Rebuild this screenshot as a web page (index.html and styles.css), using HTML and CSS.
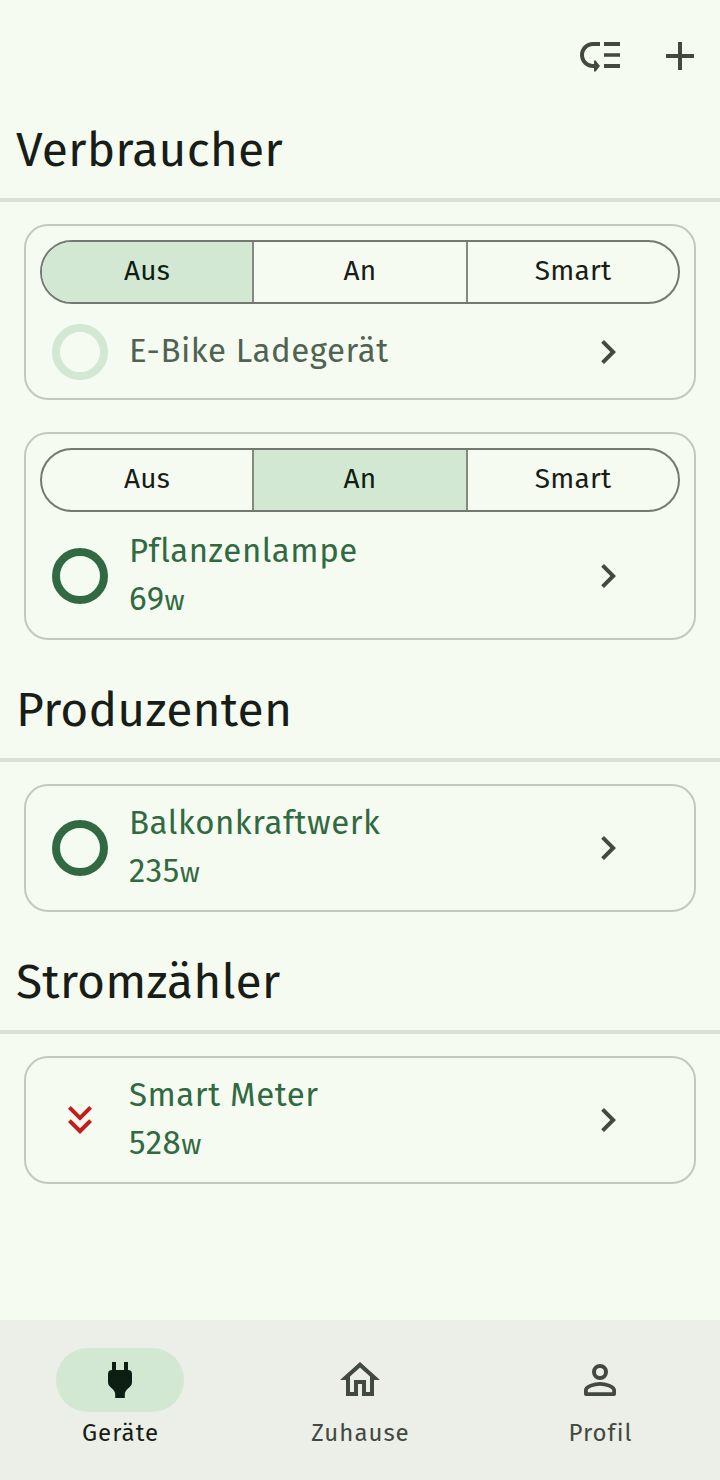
FILE: index.html
```html
<!DOCTYPE html>
<html lang="de">
<head>
<meta charset="utf-8">
<title>Geräte</title>
<link rel="stylesheet" href="styles.css">
</head>
<body>
<div class="app">
  <header class="toolbar">
    <svg class="icon" viewBox="0 0 24 24"><path d="M14 5h8v2h-8zm0 5.600h8v1.800h-8zm0 5.400h8v2h-8zM2 11.500C2 15.080 4.920 18 8.500 18H9v1.700h.8L12 17l-2.200-2.700H9V16h-.5C6.020 16 4 13.980 4 11.500S6.020 7 8.500 7H12V5H8.500C4.920 5 2 7.920 2 11.500z"/></svg>
    <svg class="icon" viewBox="0 0 24 24"><path d="M19 13h-6v6h-2v-6H5v-2h6V5h2v6h6z"/></svg>
  </header>
  <main class="content">
    <section class="section">
      <h2 class="heading">Verbraucher</h2>
      <div class="cards">
        <article class="card">
          <div class="segments">
            <div class="segment selected">Aus</div>
            <div class="segment">An</div>
            <div class="segment">Smart</div>
          </div>
          <div class="device single off">
            <span class="lead"><span class="ring"></span></span>
            <div class="info"><span>E-Bike Ladegerät</span></div>
            <svg class="icon" viewBox="0 0 24 24"><path d="M10 6L8.59 7.41 13.17 12l-4.58 4.59L10 18l6-6z"/></svg>
          </div>
        </article>
        <article class="card">
          <div class="segments">
            <div class="segment">Aus</div>
            <div class="segment selected">An</div>
            <div class="segment">Smart</div>
          </div>
          <div class="device">
            <span class="lead"><span class="ring"></span></span>
            <div class="info"><span>Pflanzenlampe</span><span>69<span class="unit">w</span></span></div>
            <svg class="icon" viewBox="0 0 24 24"><path d="M10 6L8.59 7.41 13.17 12l-4.58 4.59L10 18l6-6z"/></svg>
          </div>
        </article>
      </div>
    </section>
    <section class="section">
      <h2 class="heading">Produzenten</h2>
      <div class="cards">
        <article class="card">
          <div class="device">
            <span class="lead"><span class="ring"></span></span>
            <div class="info"><span>Balkonkraftwerk</span><span>235<span class="unit">w</span></span></div>
            <svg class="icon" viewBox="0 0 24 24"><path d="M10 6L8.59 7.41 13.17 12l-4.58 4.59L10 18l6-6z"/></svg>
          </div>
        </article>
      </div>
    </section>
    <section class="section">
      <h2 class="heading">Stromzähler</h2>
      <div class="cards">
        <article class="card">
          <div class="device">
            <span class="lead"><svg class="icon import" viewBox="0 0 24 24"><path d="M18 6.41L16.59 5 12 9.58 7.41 5 6 6.41l6 6zM18 13l-1.41-1.41L12 16.17l-4.59-4.58L6 13l6 6z"/></svg></span>
            <div class="info"><span>Smart Meter</span><span>528<span class="unit">w</span></span></div>
            <svg class="icon" viewBox="0 0 24 24"><path d="M10 6L8.59 7.41 13.17 12l-4.58 4.59L10 18l6-6z"/></svg>
          </div>
        </article>
      </div>
    </section>
  </main>
  <nav class="nav">
    <div class="tab active">
      <span class="pill"><svg class="icon" viewBox="0 0 24 24"><path d="M8 3h2v4h4V3h2v4q2 0 2 2v4c0 1.5-.8 2.200-1.700 3-1 .9-1.800 1.700-1.900 3V21h-4.800v-2c-.1-1.300-.9-2.100-1.900-3C6.800 15.200 6 14.500 6 13V9q0-2 2-2z"/></svg></span>
      <span>Geräte</span>
    </div>
    <div class="tab">
      <span class="pill"><svg class="icon" viewBox="0 0 24 24"><path d="M12 5.69l5 4.5V18h-2v-6H9v6H7v-7.81l5-4.5M12 3L2 12h3v8h6v-6h2v6h6v-8h3z"/></svg></span>
      <span>Zuhause</span>
    </div>
    <div class="tab">
      <span class="pill"><svg class="icon" viewBox="0 0 24 24"><path fill-rule="evenodd" d="M12 4a4 4 0 1 0 0 8 4 4 0 0 0 0-8zm0 2a2 2 0 1 1 0 4 2 2 0 0 1 0-4zM12 13c-2.67 0-8 1.34-8 4v2q0 1 1 1h14q1 0 1-1v-2c0-2.66-5.33-4-8-4zm0 1.9c2.97 0 6.1 1.46 6.1 2.1v1.1H5.9V17c0-.64 3.13-2.1 6.1-2.1z"/></svg></span>
      <span>Profil</span>
    </div>
  </nav>
</div>
</body>
</html>
```
FILE: styles.css
```css
* { box-sizing: border-box; }
body {
  margin: 0;
  background: #f5fbf1;
  color: #181d18;
  font-family: "Fira Sans", "Noto Sans", sans-serif;
}
.app { display: flex; flex-direction: column; height: 1480px; }
.icon { display: block; flex: none; width: 48px; height: 48px; fill: #424940; }
.toolbar { display: flex; justify-content: flex-end; align-items: center; gap: 32px; height: 112px; padding: 0 16px; }
.content { flex: 1; }
.heading {
  display: flex;
  align-items: center;
  height: 90px;
  margin: 0;
  padding: 0 16px 10px;
  border-bottom: 4px solid #dbe1d9;
  font-size: 48px;
  font-weight: 400;
  letter-spacing: .15px;
  white-space: nowrap;
}
.cards { display: flex; flex-direction: column; gap: 32px; padding: 22px 24px 32px; }
.card { border: 2px solid #c1c9be; border-radius: 24px; }
.segments {
  display: grid;
  grid-template-columns: 210px 214px 1fr;
  height: 64px;
  margin: 14px 14px 0;
  overflow: hidden;
  border: 2px solid #727970;
  border-radius: 32px;
}
.segment { display: flex; align-items: center; justify-content: center; padding-bottom: 4px; font-size: 28px; letter-spacing: .2px; }
.segment + .segment { border-left: 2px solid #838a80; }
.selected { background: #d2e8d3; color: #0d1f13; }
.device { display: flex; align-items: center; height: 124px; padding: 0 62px 0 22px; color: #316a42; }
.segments + .device { height: 126px; padding-top: 2px; }
.segments + .single { height: 94px; }
.single .info { padding-bottom: 2px; }
.lead { display: grid; place-items: center; width: 64px; margin-right: 16px; }
.ring { width: 56px; height: 56px; border: 8px solid #316a42; border-radius: 50%; }
.off { color: #506352; }
.off .ring { border-color: #d2e8d3; }
.import { fill: #c41c1c; }
.info { display: flex; flex: 1; flex-direction: column; padding-left: 1px; font-size: 33px; line-height: 48px; letter-spacing: .55px; white-space: nowrap; }
.unit { font-size: 28px; }
.nav { display: grid; grid-template-columns: repeat(3, 1fr); height: 160px; padding-top: 28px; background: #ebefe7; }
.tab { display: flex; flex-direction: column; align-items: center; gap: 4px; padding-left: 1px; color: #424940; font-size: 24px; line-height: 34px; letter-spacing: 1px; }
.pill { display: grid; place-items: center; width: 128px; height: 64px; margin-left: -1px; border-radius: 32px; }
.active { color: #181d18; }
.active .pill { background: #d2e8d3; }
.active .icon { fill: #0d1f13; }
```
